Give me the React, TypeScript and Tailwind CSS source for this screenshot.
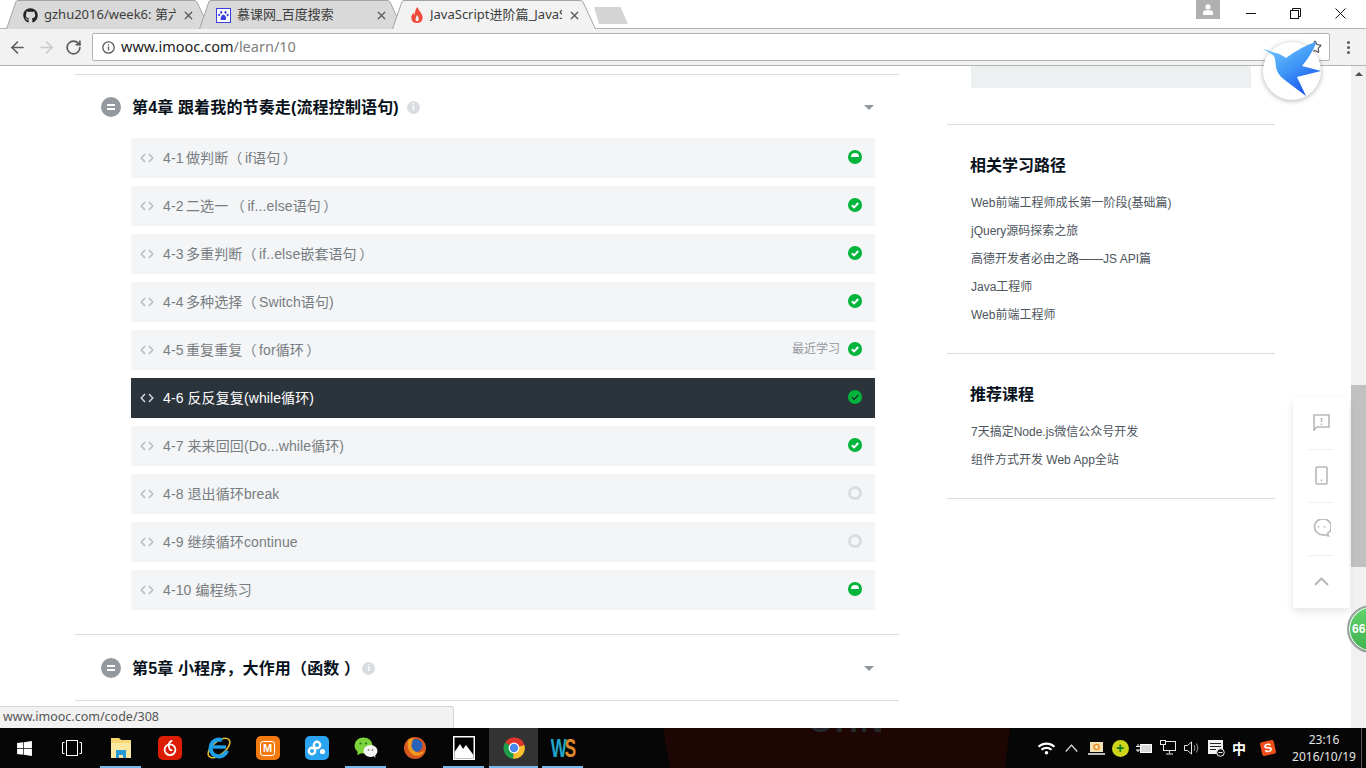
import React from "react";
import { FaGithub, FaWindows, FaWifi } from "react-icons/fa";
import { ArrowLeft, ArrowRight, RotateCw, Star, X } from "lucide-react";

type LessonState = "half" | "done" | "empty";

interface Lesson {
  title: string;
  state: LessonState;
  recent?: boolean;
  active?: boolean;
  tight?: boolean;
}

const lessons: Lesson[] = [
  { title: "4-1 做判断（ if语句 ）", state: "half", tight: true },
  { title: "4-2 二选一 （ if...else语句 ）", state: "done", tight: true },
  { title: "4-3 多重判断（ if..else嵌套语句 ）", state: "done", tight: true },
  { title: "4-4 多种选择（ Switch语句)", state: "done", tight: true },
  { title: "4-5 重复重复（ for循环 ）", state: "done", recent: true, tight: true },
  { title: "4-6 反反复复(while循环)", state: "done", active: true },
  { title: "4-7 来来回回(Do...while循环)", state: "done" },
  { title: "4-8 退出循环break", state: "empty" },
  { title: "4-9 继续循环continue", state: "empty" },
  { title: "4-10 编程练习", state: "half" },
];

const paths = [
  "Web前端工程师成长第一阶段(基础篇)",
  "jQuery源码探索之旅",
  "高德开发者必由之路——JS API篇",
  "Java工程师",
  "Web前端工程师",
];

const courses = ["7天搞定Node.js微信公众号开发", "组件方式开发 Web App全站"];

const StateIcon: React.FC<{ state: LessonState; active?: boolean }> = ({ state, active }) => {
  if (state === "empty") {
    return <div className="h-[14px] w-[14px] rounded-full border-[3px] border-[#d9dde1]" />;
  }
  if (state === "half") {
    return (
      <svg width="14" height="14" viewBox="0 0 14 14">
        <circle cx="7" cy="7" r="7" fill="#00b43c" />
        <path d="M3 7a4 4 0 0 1 8 0z" fill="#fff" />
      </svg>
    );
  }
  return (
    <svg width="14" height="14" viewBox="0 0 14 14">
      <circle cx="7" cy="7" r="7" fill="#00b43c" />
      <path d="M3.8 7.2l2.3 2.2 4.2-4.4" fill="none" stroke={active ? "#1f2a2e" : "#fff"} strokeWidth={active ? 1.2 : 2} />
    </svg>
  );
};

const ChapterHeader: React.FC<{ title: string; height: string; infoGap: string }> = ({ title, height, infoGap }) => (
  <div className={`flex items-center pl-[26px] pr-[25px] ${height}`}>
    <div className="flex h-5 w-5 flex-col items-center justify-center gap-[2px] rounded-full bg-[#93999f]">
      <div className="h-[2px] w-2 bg-white" />
      <div className="h-[2px] w-2 bg-white" />
    </div>
    <h3 className="ml-[11px] pt-[2px] text-[16px] font-bold tracking-[0.15px] text-[#07111b]">{title}</h3>
    <div className={`mt-[2px] flex h-[13px] w-[13px] items-center justify-center rounded-full bg-[#d9dde1] text-[9px] font-bold text-white ${infoGap}`}>
      i
    </div>
    <div className="ml-auto mt-[1px] h-0 w-0 border-x-[5.5px] border-t-[5px] border-x-transparent border-t-[#93999f]" />
  </div>
);

const LessonRow: React.FC<{ lesson: Lesson }> = ({ lesson }) => (
  <div
    className={`mb-2 flex h-10 items-center pl-[9px] pr-[13px] text-[14px] ${
      lesson.active ? "bg-[#2b333b] text-white" : "bg-[#f3f5f7] text-[#787d82]"
    }`}
  >
    <svg width="14" height="10" viewBox="0 0 14 10" fill="none" stroke={lesson.active ? "#d9dde1" : "#b5b9bc"} strokeWidth="1.4">
      <path d="M5 1L1.2 5 5 9M9 1l3.800 4L9 9" />
    </svg>
    <span className={`ml-[9px] tracking-[0.1px] ${lesson.tight ? "[word-spacing:-1.5px]" : ""}`}>{lesson.title}</span>
    <div className="ml-auto flex items-center gap-2 pb-[2px]">
      {lesson.recent && <span className="text-[12px] text-[#93999f]">最近学习</span>}
      <StateIcon state={lesson.state} active={lesson.active} />
    </div>
  </div>
);

const SideBlock: React.FC<{ title: string; items: string[]; pad: string; gap: string }> = ({ title, items, pad, gap }) => (
  <div className={`border-b border-[#d9dde1] pl-[23px] ${pad}`}>
    <h4 className={`flex h-[28px] items-center text-[16px] font-bold text-[#07111b] ${gap}`}>{title}</h4>
    {items.map((item) => (
      <div key={item} className="flex h-[28px] items-center pl-[1px] text-[12px] text-[#4d555d]">
        {item}
      </div>
    ))}
  </div>
);

const Tab: React.FC<{
  icon: React.ReactNode;
  title: string;
  active?: boolean;
}> = ({ icon, title, active }) => (
  <div className={`relative -ml-[11px] flex h-[28px] w-[204px] items-center pl-[17px] pt-[2px] first:ml-[6px] ${active ? "z-10" : ""}`}>
    <svg className="absolute inset-0" width="204" height="29" viewBox="0 0 204 29">
      <path d="M0.5 29L10 1.500Q10.500 .5 12 .5H188Q190 .5 191 2L203.500 29" fill={active ? "#f2f2f2" : "#d9d9d9"} stroke="#a4a4a4" />
    </svg>
    <div className="relative flex w-[15px] justify-center">{icon}</div>
    <span className="relative ml-[6px] w-[132px] overflow-hidden whitespace-nowrap text-[13px] text-[#3c3c3c] [font-family:'Noto_Sans','Noto_Sans_CJK_SC',sans-serif]">
      {title}
    </span>
    <X className="relative ml-[6px] text-[#555]" size={13} strokeWidth={2.2} />
  </div>
);

const Bird: React.FC = () => (
  <svg className="absolute left-[1260px] top-[38px]" width="64" height="62" viewBox="110 38 64 62">
    <defs>
      <linearGradient id="bird" x1="0" y1="0" x2="0.7" y2="1">
        <stop offset="0" stopColor="#7fd0ff" />
        <stop offset="0.55" stopColor="#3f97f7" />
        <stop offset="1" stopColor="#1a52ec" />
      </linearGradient>
    </defs>
    <path
      d="M112.7 48.5L124 52.5Q129 53 133 56L136 58Q150 47 166.7 41.7Q162 54 152 66L171 71L147 77L156 96L136 81Q125 74 125.5 62Q125 56 122 54.5Z"
      fill="url(#bird)"
    />
  </svg>
);

const taskCell = "relative flex h-10 w-[49px] items-center justify-center";
const runningBar = "absolute bottom-0 left-[4px] right-[4px] h-[2px] bg-[#76b9ed]";

const ChromeIcon: React.FC = () => (
  <svg width="24" height="24" viewBox="0 0 24 24">
    <path d="M12 12L3 6.5A10.8 10.8 0 0 1 22.4 9Z" fill="#e0352b" />
    <path d="M12 12L3 6.5A10.8 10.8 0 0 0 11 22.8Z" fill="#1e9e4a" />
    <path d="M12 12L22.4 9A10.8 10.8 0 0 1 11 22.8Z" fill="#fbc02d" />
    <circle cx="12" cy="12" r="5.4" fill="#fff" />
    <circle cx="12" cy="12" r="4.2" fill="#4a88ee" />
  </svg>
);

const Taskbar: React.FC = () => (
  <div className="relative flex h-10 shrink-0 items-center overflow-hidden bg-[#060606] text-white">
    <svg className="absolute left-[660px] top-0" width="360" height="40" viewBox="0 0 360 40">
      <path d="M3 0H350L345 40H10Z" fill="#1d0604" />
    </svg>
    <span className="absolute left-[808px] top-[-23px] text-[32px] font-bold leading-[32px] tracking-[2px] text-[#24292b]">
      OHN
    </span>

    <div className="relative flex items-center">
      <div className="flex h-10 w-[48px] items-center justify-center">
        <FaWindows size={17} />
      </div>
      <div className="flex h-10 w-[48px] items-center justify-center">
        <svg width="20" height="16" viewBox="0 0 20 16" fill="none" stroke="#fff" strokeWidth="1">
          <rect x="4.5" y="0.5" width="11" height="15" />
          <path d="M2.5 2.5H.5v11h2M17.5 2.5h2v11h-2" />
        </svg>
      </div>
      <div className={taskCell}>
        <svg width="22" height="24" viewBox="0 0 22 24">
          <path d="M1 2h8l2 2h10v18H1z" fill="#f7d774" />
          <path d="M1 7h20v15H1z" fill="#fce8a0" />
          <path d="M6 14h10v8h-3v-3H9v3H6z" fill="#2a9ad6" />
        </svg>
        <div className={runningBar} />
      </div>
      <div className={taskCell}>
        <div className="flex h-6 w-6 items-center justify-center rounded-[5px] bg-[#dd1c04]">
          <svg width="18" height="18" viewBox="0 0 16 16" fill="none" stroke="#fff" strokeWidth="1.6">
            <circle cx="8" cy="9.5" r="4.8" />
            <path d="M10 1.500Q5.500 3 7.500 8.500q1 2.200 2.500 1" />
          </svg>
        </div>
      </div>
      <div className={taskCell}>
        <svg width="26" height="26" viewBox="0 0 26 26">
          <ellipse cx="13" cy="13" rx="13" ry="6.5" transform="rotate(-40 13 13)" fill="none" stroke="#e2b92a" strokeWidth="1.6" />
          <circle cx="13" cy="13" r="8.5" fill="none" stroke="#1f9fe8" strokeWidth="4" strokeDasharray="40 14" transform="rotate(20 13 13)" />
          <path d="M6 12h14" stroke="#1f9fe8" strokeWidth="3.4" />
        </svg>
      </div>
      <div className={taskCell}>
        <div className="flex h-6 w-6 items-center justify-center rounded-[5px] bg-[#f37a10]">
          <span className="flex h-[15px] w-[15px] items-center justify-center rounded-[3px] border-[1.5px] border-white text-[11px] font-bold leading-none">
            M
          </span>
        </div>
      </div>
      <div className={taskCell}>
        <div className="flex h-6 w-6 items-center justify-center rounded-[5px] bg-[#2aa4f0]">
          <svg width="20" height="16" viewBox="0 0 20 16" fill="none" stroke="#fff" strokeWidth="2.4">
            <circle cx="10" cy="5" r="3.2" />
            <circle cx="5" cy="11" r="3.2" />
            <circle cx="15.5" cy="11.5" r="1.4" />
          </svg>
        </div>
      </div>
      <div className={taskCell}>
        <svg width="24" height="22" viewBox="0 0 24 22">
          <ellipse cx="9.5" cy="8.5" rx="9" ry="8" fill="#7dd43a" />
          <path d="M4 14l-1 4 5-2z" fill="#7dd43a" />
          <circle cx="6.5" cy="6.5" r="1.1" fill="#167a16" />
          <circle cx="12" cy="6.5" r="1.1" fill="#167a16" />
          <ellipse cx="16.5" cy="14" rx="7" ry="6" fill="#f4f4f4" />
          <path d="M19 18l2.5 3-.5-4z" fill="#f4f4f4" />
          <circle cx="14.5" cy="13" r=".9" fill="#888" />
          <circle cx="18.5" cy="13" r=".9" fill="#888" />
        </svg>
        <div className={runningBar} />
      </div>
      <div className={taskCell}>
        <svg width="24" height="24" viewBox="0 0 24 24">
          <circle cx="12" cy="12" r="11" fill="#d9561e" />
          <circle cx="13" cy="9.5" r="6.5" fill="#2a63b8" />
          <path d="M5 4q-2 10 5 15 8 3 12-5-4 4-9 2-6-3-4-9 0-3 2-5-4 0-6 2z" fill="#f29a1f" />
        </svg>
      </div>
      <div className={taskCell}>
        <svg width="22" height="24" viewBox="0 0 22 24">
          <rect width="22" height="24" fill="#fff" />
          <rect x="1.5" y="1.5" width="19" height="21" fill="#000" />
          <path d="M1.5 22.5V16L7 8l3 5 3-4 3 4 4.5 6v3.5z" fill="#fff" />
        </svg>
        <div className={runningBar} />
      </div>
      <div className={`${taskCell} ml-[1px] bg-[#333333]`}>
        <ChromeIcon />
        <div className="absolute bottom-0 left-0 right-0 h-[2px] bg-[#76b9ed]" />
      </div>
      <div className={taskCell}>
        <span className="scale-y-150 text-[17px] font-bold leading-none tracking-[-2px] [font-family:'Liberation_Sans',sans-serif]">
          <span className="text-[#1fa6c9]">W</span>
          <span className="text-[#e08a2b]">S</span>
        </span>
        <div className={runningBar} />
      </div>
    </div>

    <div className="relative ml-auto flex h-10 items-center">
      <div className="flex w-[24px] justify-center"><FaWifi size={17} /></div>
      <div className="flex w-[26px] justify-center">
        <svg width="13" height="8" viewBox="0 0 13 8" fill="none" stroke="#e6e6e6" strokeWidth="1.2">
          <path d="M.8 7.5L6.5 1.2l5.7 6.3" />
        </svg>
      </div>
      <div className="flex w-[24px] justify-center">
        <svg width="17" height="13" viewBox="0 0 17 13">
          <rect x="2" y="0" width="13" height="10" fill="#f3e3b4" />
          <circle cx="8.5" cy="5" r="2.6" fill="none" stroke="#ee8a1c" strokeWidth="1.4" />
          <path d="M0 11h17v2H0z" fill="#bdbdbd" />
        </svg>
      </div>
      <div className="flex w-[24px] justify-center">
        <div className="flex h-[17px] w-[17px] items-center justify-center rounded-full bg-[#cdd41a] text-[14px] font-bold leading-none text-[#0a7a1e]">
          +
        </div>
      </div>
      <div className="flex w-[24px] justify-center">
        <svg width="16" height="12" viewBox="0 0 16 12" fill="none" stroke="#fff">
          <rect x="4.5" y="2.5" width="11" height="8" fill="#d8d8d8" />
          <path d="M0 4.500h4M0 8h4M2 2v2M2 8v2" />
        </svg>
      </div>
      <div className="flex w-[24px] justify-center">
        <svg width="16" height="16" viewBox="0 0 16 16" fill="none" stroke="#e8e8e8">
          <rect x="3.5" y="1.5" width="12" height="9" />
          <path d="M9.500 10.500v3M6 14h7" />
          <rect x=".5" y=".5" width="5" height="4" fill="#060606" />
        </svg>
      </div>
      <div className="flex w-[24px] justify-center">
        <svg width="16" height="14" viewBox="0 0 16 14" fill="none" stroke="#e8e8e8">
          <path d="M.5 4.500h3l4-3.500v12l-4-3.500h-3z" />
          <path d="M10 4q1.800 3 0 6M12.500 2.500q2.800 4.500 0 9" stroke="#9a9a9a" />
        </svg>
      </div>
      <div className="flex w-[25px] justify-center">
        <svg width="17" height="17" viewBox="0 0 17 17">
          <rect width="15" height="14" fill="#f2f2f2" />
          <path d="M2 3.500h11M2 6.500h11M2 9.500h6" stroke="#222" />
          <circle cx="12.5" cy="12.5" r="3.8" fill="#111" stroke="#eee" />
          <path d="M10.500 12.500h4" stroke="#eee" />
        </svg>
      </div>
      <div className="flex w-[20px] justify-center text-[14px] font-bold text-white [font-family:'Noto_Sans_CJK_SC',sans-serif]">中</div>
      <div className="ml-[12px] flex h-[14px] w-[14px] -rotate-12 items-center justify-center rounded-[2px] bg-[#ef4f1b] text-[12px] font-bold leading-none text-white">
        S
      </div>
      <div className="ml-[14px] flex w-[70px] flex-col items-center text-[12px] leading-[17px] text-[#e4e4e4] [font-family:'Noto_Sans',sans-serif]">
        <span>23:16</span>
        <span>2016/10/19</span>
      </div>
      <div className="ml-[2px] h-10 w-[1px] bg-[#555]" />
      <div className="w-[4px]" />
    </div>
  </div>
);

export default function App() {
  return (
    <div className="relative flex h-[768px] w-[1366px] flex-col overflow-hidden bg-white [font-family:'Liberation_Sans','Noto_Sans_CJK_SC',sans-serif]">
      {/* tab strip */}
      <div className="flex h-[28px] shrink-0 items-end bg-white">
        <Tab icon={<FaGithub size={15} className="text-[#222]" />} title="gzhu2016/week6: 第六周" />
        <Tab
          icon={
            <div className="flex h-[15px] w-[15px] items-center justify-center border border-[#3b3fe0] bg-white">
              <svg width="11" height="11" viewBox="0 0 11 11" fill="#3b3fe0">
                <ellipse cx="3.2" cy="2.2" rx="1" ry="1.5" />
                <ellipse cx="7.5" cy="2.2" rx="1" ry="1.5" />
                <ellipse cx="1.2" cy="5" rx="1" ry="1.3" />
                <ellipse cx="9.6" cy="5" rx="1" ry="1.3" />
                <path d="M5.400 4.500Q3.500 5 2.700 7.400 2.200 10 4 10h2.800q1.800 0 1.300-2.600Q7.200 5 5.400 4.500z" />
              </svg>
            </div>
          }
          title="慕课网_百度搜索"
        />
        <Tab
          active
          icon={
            <svg width="12" height="16" viewBox="0 0 12 16">
              <path d="M6.500 0Q7.500 3 10 6q2 3 1.600 5.500Q10.800 16 6 16 1 16 .4 11.500 0 8.500 2.500 5.500 2.800 7.500 3.800 8 3.500 3.500 6.500 0z" fill="#ef4b3c" />
              <path d="M6 8Q8.500 10.500 7.800 12.800 7 14.500 6 14.300 4.500 14 4.500 12.500 4.500 10.500 6 8z" fill="#f2f2f2" />
            </svg>
          }
          title="JavaScript进阶篇_JavaScript"
        />
        <div className="-ml-[2px] mb-[4px] h-[17px] w-[34px] bg-[#d4d4d4] [clip-path:polygon(0_0,78%_0,100%_100%,15%_100%)]" />
        <div className="mb-[9px] ml-auto flex h-[19px] w-[24px] items-center justify-center self-start bg-[#b0b0b0]">
          <svg width="12" height="11" viewBox="0 0 12 11" fill="#fff">
            <circle cx="6" cy="2.800" r="2.600" />
            <path d="M1 8q1-2 5-2t5 2v3H1z" />
          </svg>
        </div>
        <div className="ml-[8px] flex w-[45px] justify-center self-start pt-[13px]">
          <div className="h-[1px] w-[10px] bg-[#111]" />
        </div>
        <div className="flex w-[45px] justify-center self-start pt-[8px]">
          <svg width="11" height="11" viewBox="0 0 11 11" fill="none" stroke="#111">
            <rect x=".5" y="2.500" width="8" height="8" />
            <path d="M2.500 2.500v-2h8v8h-2" />
          </svg>
        </div>
        <div className="flex w-[45px] justify-center self-start pt-[8px]">
          <svg width="11" height="11" viewBox="0 0 11 11" fill="none" stroke="#111">
            <path d="M.5 .5l10 10M10.500 .5l-10 10" />
          </svg>
        </div>
        <div className="w-[3px]" />
      </div>

      {/* toolbar */}
      <div className="flex h-[38px] shrink-0 items-center border-y border-[#b3b3b3] bg-[#f2f2f2]">
        <div className="flex w-[88px] items-center text-[#5a5a5a]">
          <ArrowLeft className="ml-[8px]" size={19} strokeWidth={2} />
          <ArrowRight className="ml-[10px] text-[#c9c9c9]" size={19} strokeWidth={2} />
          <RotateCw className="ml-[9px]" size={17} strokeWidth={2.4} />
        </div>
        <div className="ml-[4px] flex h-[28px] w-[1238px] items-center rounded-[2px] border border-[#b3b3b3] bg-white">
          <svg className="ml-[9px]" width="13" height="13" viewBox="0 0 13 13" fill="none" stroke="#5a5a5a" strokeWidth="1.300">
            <circle cx="6.500" cy="6.500" r="5.700" />
            <path d="M6.500 5.500v4M6.500 3.300v1.200" />
          </svg>
          <span className="ml-[6px] text-[14.5px] text-[#222] [font-family:'Noto_Sans',sans-serif]">
            www.imooc.com<span className="text-[#808080]">/learn/10</span>
          </span>
          <Star className="ml-auto mr-[7px] text-[#555]" size={14} strokeWidth={2} />
        </div>
        <div className="ml-[17px] flex flex-col gap-[2px]">
          <div className="h-[3px] w-[3px] rounded-full bg-[#5a5a5a]" />
          <div className="h-[3px] w-[3px] rounded-full bg-[#5a5a5a]" />
          <div className="h-[3px] w-[3px] rounded-full bg-[#5a5a5a]" />
        </div>
      </div>

      {/* page */}
      <div className="flex min-h-0 flex-1">
        <div className="flex min-w-0 flex-1">
          <div className="ml-[75px] mt-2 w-[824px]">
            <div className="border-t border-[#d9dde1] pb-[16px]">
              <ChapterHeader title="第4章 跟着我的节奏走(流程控制语句)" height="h-[63px]" infoGap="ml-2" />
              <div className="ml-[56px] mr-[24px]">
                {lessons.map((lesson) => (
                  <LessonRow key={lesson.title} lesson={lesson} />
                ))}
              </div>
            </div>
            <div className="border-y border-[#d9dde1]">
              <ChapterHeader title="第5章 小程序，大作用（函数 ）" height="h-[65px]" infoGap="ml-[2px]" />
            </div>
          </div>
          <div className="ml-[48px] w-[328px]">
            <div className="border-b border-[#d9dde1] pb-[36px]">
              <div className="ml-[24px] h-[22px] w-[280px] bg-[#edf0f0]" />
            </div>
            <SideBlock title="相关学习路径" items={paths} pad="pt-[27px] pb-[24px]" gap="mb-[9px]" />
            <SideBlock title="推荐课程" items={courses} pad="pt-[27px] pb-[24px]" gap="mb-[9px]" />
          </div>
        </div>
        <div className="relative w-[15px] shrink-0 bg-[#f1f1f1]">
          <div className="mx-auto mt-[6px] h-0 w-0 border-x-[4px] border-b-[4px] border-x-transparent border-b-[#505050]" />
          <div className="absolute left-0 top-[319px] h-[182px] w-full bg-[#c1c1c1]" />
        </div>
      </div>

      <Taskbar />

      {/* floating side tools */}
      <div className="absolute left-[1293px] top-[397px] flex h-[211px] w-[56px] flex-col items-center bg-white shadow-[0_4px_8px_rgba(7,17,27,0.1)]">
        <div className="flex h-[53px] w-[26px] items-center justify-center border-b border-[#edf1f2] pb-[2px]">
          <svg width="17" height="17" viewBox="0 0 17 17" fill="none" stroke="#b5b9bc" strokeWidth="1.600">
            <path d="M1 1h15v12H4l-3 3z" />
            <path d="M8.500 4v4M8.500 9.500v1.500" />
          </svg>
        </div>
        <div className="flex h-[53px] w-[26px] items-center justify-center border-b border-[#edf1f2] pb-[2px]">
          <svg width="13" height="19" viewBox="0 0 13 19" fill="none" stroke="#b5b9bc" strokeWidth="1.600">
            <rect x="1" y="1" width="11" height="17" rx="1" />
            <path d="M6.500 13.500v1.500" />
          </svg>
        </div>
        <div className="flex h-[53px] w-[26px] items-center justify-center border-b border-[#edf1f2] pb-[2px]">
          <svg width="19" height="18" viewBox="0 0 19 18" fill="none" stroke="#b5b9bc" strokeWidth="1.600">
            <path d="M15.500 14.500A8.300 8 0 1 0 12 15.800L16.500 16.800z" />
            <path d="M6.500 7v1.500M12.500 7v1.500" />
          </svg>
        </div>
        <div className="flex h-[52px] w-[26px] items-center justify-center pb-[2px]">
          <svg width="15" height="9" viewBox="0 0 15 9" fill="none" stroke="#b5b9bc" strokeWidth="2">
            <path d="M1 8l6.500-6.500L14 8" />
          </svg>
        </div>
      </div>

      {/* thunder float + bird */}
      <div className="absolute left-[1263px] top-[42px] h-[58px] w-[58px] rounded-full bg-white shadow-[0_1px_5px_rgba(0,0,0,0.3)]" />
      <Bird />

      {/* speed ball */}
      <div className="absolute left-[1347px] top-[605px] flex h-[48px] w-[48px] items-center rounded-full border-2 border-[#9ba3a0] bg-gradient-to-b from-[#62d46e] to-[#3fb24d] pl-[3px] text-[12px] font-bold text-white shadow-[inset_0_0_0_1px_#fff]">
        66
      </div>

      {/* link status bubble */}
      <div className="absolute left-0 top-[706px] flex h-[22px] w-[454px] items-center rounded-tr-[3px] border-r border-t border-[#d4d4d4] bg-[#f2f2f2] pl-[3px] text-[12.5px] text-[#555] [font-family:'Noto_Sans',sans-serif]">
        www.imooc.com/code/308
      </div>
    </div>
  );
}
